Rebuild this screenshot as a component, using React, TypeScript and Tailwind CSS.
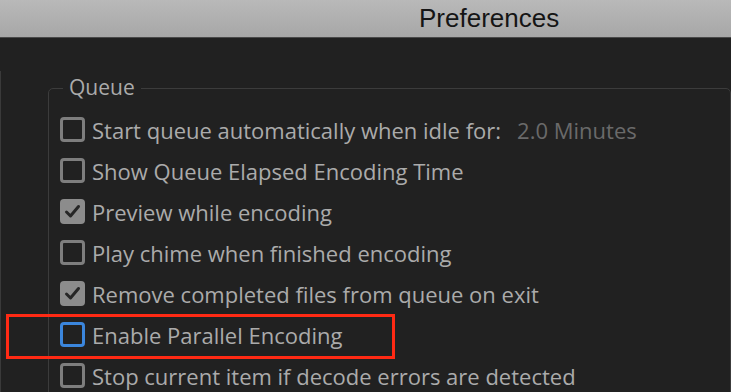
import React from "react";

type Row = { label: string; state: "off" | "on" | "focus"; extra?: string };

const rows: Row[] = [
  { label: "Start queue automatically when idle for:", state: "off", extra: "2.0 Minutes" },
  { label: "Show Queue Elapsed Encoding Time", state: "off" },
  { label: "Preview while encoding", state: "on" },
  { label: "Play chime when finished encoding", state: "off" },
  { label: "Remove completed files from queue on exit", state: "on" },
  { label: "Enable Parallel Encoding", state: "focus" },
  { label: "Stop current item if decode errors are detected", state: "off" },
];

function Box({ state }: { state: Row["state"] }) {
  if (state === "on") {
    return (
      <div className="w-[25px] h-[25px] rounded-[4px] bg-[#8c8c8c] flex items-center justify-center shrink-0">
        <svg width="17" height="15" viewBox="0 0 17 15">
          <path d="M2.5 8 L6.5 12 L14.5 2.5" fill="none" stroke="#262626" strokeWidth="3" strokeLinecap="round" strokeLinejoin="round" />
        </svg>
      </div>
    );
  }
  return (
    <div
      className={
        "w-[25px] h-[25px] rounded-[4px] border-[3px] shrink-0 " +
        (state === "focus" ? "border-[#3b86dd]" : "border-[#7e7e7e]")
      }
    />
  );
}

export default function App() {
  return (
    <div
      className="w-[731px] h-[392px] overflow-hidden bg-[#212121] relative"
      style={{ fontFamily: "'Open Sans', 'DejaVu Sans', sans-serif" }}
    >
      <div className="h-[38px] bg-gradient-to-b from-[#b9b9b9] to-[#a7a7a7] border-b border-[#4a4a4a] flex items-center pl-[419px]">
        <span
          className="text-[26px] text-[#151515]"
          style={{ fontFamily: "'Liberation Sans', Arial, sans-serif" }}
        >
          Preferences
        </span>
      </div>
      <div className="pt-[33px]">
        <div className="border-l border-[#3a3a3a] pl-[47px] pt-[17px] h-[400px]">
          <div className="relative border border-[#3c3c3c] rounded-[5px] pt-[20px] pl-[11px] pb-[20px]">
            <div className="absolute -top-[16px] left-[14px] bg-[#212121] px-[6px] text-[21px] leading-[28px] text-[#ababab]">
              Queue
            </div>
            {rows.map((r) => (
              <div key={r.label} className="flex items-center h-[41px]">
                <Box state={r.state} />
                <span className="ml-[7px] text-[22px] leading-[30px] text-[#ababab] whitespace-nowrap">{r.label}</span>
                {r.extra && (
                  <span className="ml-[16px] text-[22px] leading-[30px] text-[#6a6a6a] whitespace-nowrap">{r.extra}</span>
                )}
              </div>
            ))}
          </div>
        </div>
      </div>
      <div className="absolute left-[6px] top-[314px] w-[389px] h-[45px] border-[3px] border-[#ff2a14]" />
    </div>
  );
}
